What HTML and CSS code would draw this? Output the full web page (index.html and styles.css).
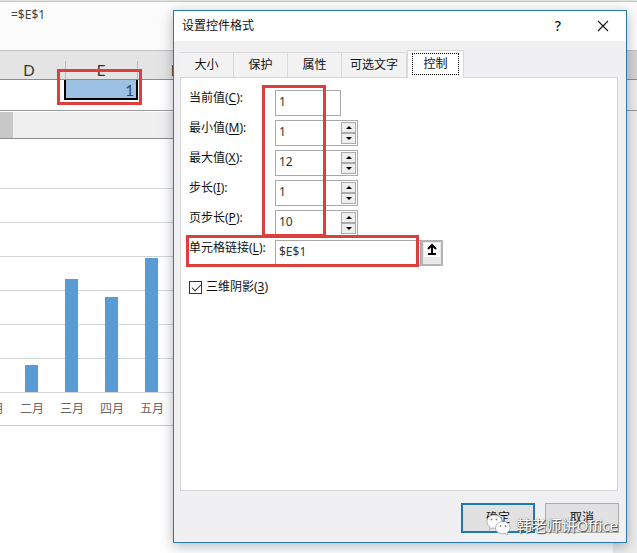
FILE: index.html
```
<!DOCTYPE html>
<html lang="zh-CN">
<head>
  <meta charset="UTF-8" />
  <meta name="viewport" content="width=device-width, initial-scale=1.0" />
  <title>设置控件格式</title>
  <link rel="stylesheet" href="styles.css">
</head>
<body>
  <main class="sheet">
    <div class="formula-bar">=$E$1</div>
    <table class="cells">
      <tr><th>D</th><th class="col">E</th><th>F</th><th class="rest"></th></tr>
      <tr><td></td><td><div class="selected">1</div></td><td></td><td class="rest"></td></tr>
    </table>
    <div class="lower">
      <div class="work">
        <div class="scrollbar"><div class="thumb"></div></div>
        <div class="chart">
          <div class="plot">
            <div class="bar bar-1"></div>
            <div class="bar bar-2"></div>
            <div class="bar bar-3"></div>
            <div class="bar bar-4"></div>
            <div class="bar bar-5"></div>
          </div>
          <div class="months">
            <span>一月</span><span>二月</span><span>三月</span><span>四月</span><span>五月</span>
          </div>
        </div>
      </div>
      <div class="side"></div>
    </div>
    <div class="mark mark-cell"></div>
  </main>

  <form class="dialog">
    <header class="titlebar">
      <h1>设置控件格式</h1>
      <button type="button" class="help" aria-label="帮助">?</button>
      <button type="button" class="close" aria-label="关闭">
        <svg width="12" height="12" viewBox="0 0 12 12"><path d="M1 1L11 11M11 1L1 11" stroke="#111" stroke-width="1.1" fill="none"/></svg>
      </button>
    </header>

    <nav class="tabs">
      <button type="button" class="tab">大小</button>
      <button type="button" class="tab">保护</button>
      <button type="button" class="tab">属性</button>
      <button type="button" class="tab wide">可选文字</button>
      <button type="button" class="tab active"><span>控制</span></button>
    </nav>

    <section class="panel">
      <div class="row">
        <label for="current">当前值(<u>C</u>):</label>
        <div class="field short"><input type="text" id="current" value="1" /></div>
      </div>
      <div class="row">
        <label for="min">最小值(<u>M</u>):</label>
        <div class="field">
          <input type="text" id="min" value="1" />
          <div class="spin"><button type="button" class="up" aria-label="增加"></button><button type="button" class="down" aria-label="减少"></button></div>
        </div>
      </div>
      <div class="row">
        <label for="max">最大值(<u>X</u>):</label>
        <div class="field">
          <input type="text" id="max" value="12" />
          <div class="spin"><button type="button" class="up" aria-label="增加"></button><button type="button" class="down" aria-label="减少"></button></div>
        </div>
      </div>
      <div class="row">
        <label for="step">步长(<u>I</u>):</label>
        <div class="field">
          <input type="text" id="step" value="1" />
          <div class="spin"><button type="button" class="up" aria-label="增加"></button><button type="button" class="down" aria-label="减少"></button></div>
        </div>
      </div>
      <div class="row">
        <label for="page">页步长(<u>P</u>):</label>
        <div class="field">
          <input type="text" id="page" value="10" />
          <div class="spin"><button type="button" class="up" aria-label="增加"></button><button type="button" class="down" aria-label="减少"></button></div>
        </div>
      </div>
      <div class="row">
        <label for="link">单元格链接(<u>L</u>):</label>
        <div class="field long"><input type="text" id="link" value="$E$1" /></div>
        <button type="button" class="pick" aria-label="选择单元格">
          <svg width="16" height="14" viewBox="0 0 16 14"><rect width="16" height="14" fill="#fff"/><path d="M8 11V3M4 6L8 2L12 6M4 11H12" stroke="#000" stroke-width="2" fill="none"/></svg>
        </button>
      </div>
      <div class="check">
        <input type="checkbox" id="shade" checked />
        <label for="shade">三维阴影(<u>3</u>)</label>
      </div>
      <div class="mark mark-values"></div>
      <div class="mark mark-link"></div>
    </section>

    <footer class="actions">
      <button type="submit" class="ok">确定</button>
      <button type="button">取消</button>
    </footer>

    <div class="watermark">
      <svg width="25" height="22" viewBox="0 0 25 22">
        <path d="M8 1C3.700 1 1 4 1 7.500C1 10 2.200 11.800 4 13L3.300 15.500L6.300 14C12 15 16 12 16 7.500C16 4 12.500 1 8 1Z" fill="#fff" stroke="#999" stroke-width=".7"/>
        <path d="M17 7.500C12.500 7.500 9.500 10.500 9.500 13.800C9.500 18 13.500 20.500 19 19.500L21.800 21L21.200 18.500C23 17.500 24 16 24 13.800C24 10.500 21 7.500 17 7.500Z" fill="#fff" stroke="#999" stroke-width=".7"/>
        <g fill="#888"><circle cx="5.500" cy="5.500" r="1"/><circle cx="10.500" cy="5.500" r="1"/><circle cx="14.500" cy="12" r=".9"/><circle cx="19.500" cy="12" r=".9"/></g>
      </svg>
      <span>韩老师讲Office</span>
    </div>
  </form>
</body>
</html>
```

FILE: styles.css
```
* {
  box-sizing: border-box;
}
body {
  margin: 0;
  font-family: 'Noto Sans', 'Noto Sans CJK SC', sans-serif;
  font-size: 12px;
  line-height: 16px;
  color: #111;
  position: relative;
  min-height: 100vh;
  display: flex;
  flex-direction: column;
  overflow-x: hidden;
}
button, input {
  font: inherit;
  color: inherit;
  margin: 0;
  padding: 0;
}

/* spreadsheet behind the dialog */
.sheet {
  flex: 1;
  display: flex;
  flex-direction: column;
  border-top: 1px solid #e2e4e0;
}
.formula-bar {
  height: 49px;
  padding: 5px 11px;
  border-top: 1px solid #c4c6c2;
  background: #fcfcfc;
  color: #444;
}
.cells {
  width: 100%;
  table-layout: fixed;
  border-collapse: collapse;
  font-family: Lato, sans-serif;
  font-size: 15px;
}
.cells th, .cells td {
  width: 74px;
  padding: 0;
}
.cells th:first-child {
  width: 64px;
}
.cells .rest {
  width: auto;
}
.cells th {
  height: 29px;
  padding-top: 10px;
  background: #e4e4e4;
  border-top: 1px solid #c2c2c2;
  border-bottom: 1px solid #8c8c8c;
  font-weight: normal;
  color: #333;
}
.cells th:first-child {
  padding-right: 6px;
}
.cells .col {
  background: linear-gradient(#bbb, #bbb) no-repeat 1px 100% / 1px 18px,
    linear-gradient(#bbb, #bbb) no-repeat 100% 100% / 1px 18px, #e4e4e4;
}
.cells th.rest {
  background: #d4d4d4;
}
.cells td {
  height: 31px;
  border-bottom: 1px solid #999;
  vertical-align: top;
}
.cells td.rest {
  background: #ececec;
}
.selected {
  height: 20px;
  padding: 2px 2px 0 0;
  border: 2px solid #000;
  border-top: none;
  background: #9dc0e5;
  color: #345;
  text-align: right;
}
.lower {
  flex: 1;
  display: flex;
}
.work {
  flex: 1;
  min-width: 0;
  overflow: hidden;
}
.side {
  width: 24px;
  background: #ececec;
}
.scrollbar {
  height: 28px;
  background: #efefef;
  border-top: 1px solid #fff;
  border-bottom: 1px solid #8c8c8c;
}
.thumb {
  width: 13px;
  height: 100%;
  background: #c8c8c8;
}
.chart {
  margin-left: -28px;
  padding-top: 49px;
  border-bottom: 1px solid #ccc;
}
.plot {
  height: 205px;
  display: flex;
  align-items: flex-end;
  gap: 27px;
  padding-left: 13px;
  background: repeating-linear-gradient(#d2d5d8 0 1px, #fff 1px 34px);
}
.bar {
  width: 13px;
  margin-bottom: 1px;
  background: #5b9bd3;
}
.bar-1 {
  height: 60px;
}
.bar-2 {
  height: 27px;
}
.bar-3 {
  height: 113px;
}
.bar-4 {
  height: 95px;
}
.bar-5 {
  height: 134px;
}
.months {
  display: flex;
  padding: 8px 0;
  color: #666;
}
.months span {
  width: 40px;
  text-align: center;
}

/* red frames round the important parts */
.mark {
  position: absolute;
  border: 3px solid #db403e;
  pointer-events: none;
}
.mark-cell {
  left: 57px;
  top: 69px;
  width: 85px;
  height: 36px;
}
.mark-values {
  left: 81px;
  top: 7px;
  width: 64px;
  height: 152px;
}
.mark-link {
  left: 5px;
  top: 157px;
  width: 233px;
  height: 32px;
}

/* dialog window */
.dialog {
  position: absolute;
  left: 173px;
  right: 10px;
  top: 10px;
  bottom: 10px;
  display: flex;
  flex-direction: column;
  border: 1px solid #2878b4;
  background: #f0eff1;
  box-shadow: 0 3px 12px rgba(40, 50, 60, 0.35);
}
.titlebar {
  display: flex;
  align-items: center;
  height: 30px;
  padding: 0 16px 0 8px;
  background: #fff;
}
.titlebar h1 {
  flex: 1;
  margin: 0;
  font-size: 12px;
  font-weight: normal;
}
.titlebar button {
  border: none;
  background: none;
}
.help {
  width: 20px;
  font-size: 14px;
  font-weight: 500;
}
.close {
  width: 14px;
  height: 14px;
  margin-left: 28px;
  display: flex;
  align-items: center;
  justify-content: center;
}
.tabs {
  display: flex;
  align-items: flex-end;
  height: 36px;
  padding: 0 6px;
}
.tab {
  width: 54px;
  height: 25px;
  border: 1px solid #d9d9d9;
  border-left: none;
  border-bottom: none;
  background: #f2f2f2;
}
.tab.wide {
  width: 65px;
}
.tab.active {
  width: 57px;
  height: 28px;
  margin-bottom: -1px;
  padding: 0 4px 2px;
  border-left: 1px solid #d9d9d9;
  background: #fff;
  z-index: 1;
}
.tab.active span {
  display: block;
  height: 22px;
  line-height: 20px;
  border: 1px dotted #000;
}
.panel {
  flex: 1;
  position: relative;
  margin: 0 8px 0 6px;
  padding: 12px 8px;
  border: 1px solid #d6d6d6;
  background: #fff;
}
.row {
  display: flex;
  height: 30px;
}
.row label {
  width: 86px;
  white-space: nowrap;
}
u {
  text-underline-offset: 2px;
}
.field {
  display: flex;
  width: 83px;
  height: 26px;
  border: 1px solid #a9a9a9;
  background: #fff;
}
.field.short {
  width: 66px;
}
.field.long {
  width: 146px;
}
.field input {
  flex: 1;
  min-width: 0;
  padding: 0 0 2px 3px;
  border: none;
  background: none;
  color: #333;
}
.spin {
  display: flex;
  flex-direction: column;
  width: 16px;
  padding: 1px 1px 1px 0;
}
.spin button {
  flex: 1;
  display: flex;
  align-items: center;
  justify-content: center;
  border: 1px solid #aaa;
  background: #eee;
}
.spin button::before {
  content: '';
  border: 3px solid transparent;
}
.spin .up::before {
  border-top: none;
  border-bottom-color: #000;
}
.spin .down::before {
  border-bottom: none;
  border-top-color: #000;
}
.pick {
  width: 22px;
  height: 26px;
  padding-bottom: 6px;
  border: 2px solid #b4b4b4;
  background: #e9e9e9;
  line-height: 0;
}
.check {
  display: flex;
  align-items: center;
  gap: 4px;
  margin-top: 9px;
}
.check input {
  appearance: none;
  width: 13px;
  height: 13px;
  border: 1px solid #333;
  background: #fff;
}
.check input:checked::before {
  content: '';
  display: block;
  width: 8px;
  height: 4px;
  margin: 2px 0 0 2px;
  border: solid #333;
  border-width: 0 0 1px 1px;
  transform: rotate(-45deg);
}
.actions {
  display: flex;
  justify-content: flex-end;
  gap: 10px;
  padding: 12px 7px 9px;
}
.actions button {
  width: 74px;
  height: 30px;
  border: 1px solid #adadad;
  background: #e1e1e1;
}
.actions .ok {
  border: 2px solid #1a7ab5;
}
.watermark {
  position: absolute;
  right: 8px;
  bottom: 6px;
  display: flex;
  align-items: center;
  gap: 5px;
  font-size: 15px;
  line-height: 22px;
  color: #fff;
  text-shadow: 1px 1px 1px #444, 0 0 1px #555;
  pointer-events: none;
}
```
